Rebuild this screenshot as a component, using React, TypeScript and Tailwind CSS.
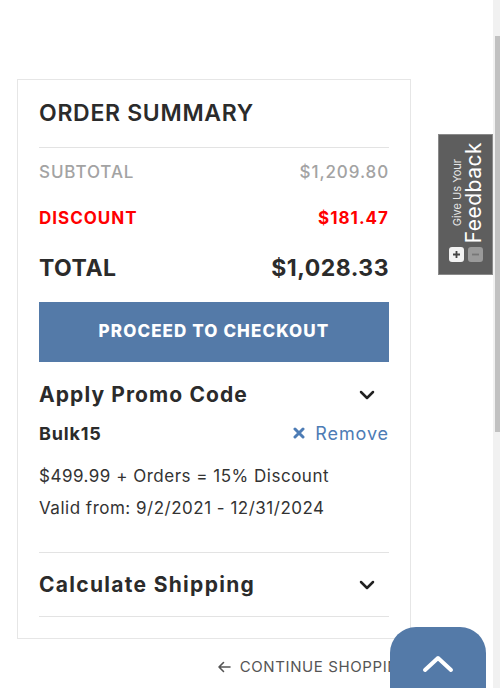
function ChevronDown() {
  return (
    <svg width="16" height="16" viewBox="0 0 16 16" fill="none">
      <path d="M2 5l6 6 6-6" stroke="#222" strokeWidth="2.5" strokeLinecap="round" strokeLinejoin="round" />
    </svg>
  );
}

function Row({ label, value, className }: { label: string; value: string; className: string }) {
  return (
    <div className={`flex items-center justify-between ${className}`}>
      <span>{label}</span>
      <span>{value}</span>
    </div>
  );
}

function FeedbackTab() {
  return (
    <div className="absolute left-[438px] top-[134px] w-[55px] h-[141px] bg-[#5e5e5e] border border-[#8a8a8a] flex flex-col items-center">
      <div className="h-[112px] w-full flex items-center justify-center pt-[4px]">
        <div className="[writing-mode:vertical-rl] rotate-180 text-center text-white leading-none">
          <div className="text-[11px] text-[#e6e6e6] mr-[5px]">Give Us Your</div>
          <div className="text-[21px] tracking-[0.5px]">Feedback</div>
        </div>
      </div>
      <div className="flex gap-[4px]">
        <span className="w-[15px] h-[15px] rounded-[3px] bg-[#f2f2f2] flex items-center justify-center">
          <svg width="9" height="9" viewBox="0 0 9 9"><path d="M4.5 1v7M1 4.5h7" stroke="#444" strokeWidth="1.8" /></svg>
        </span>
        <span className="w-[15px] h-[15px] rounded-[3px] bg-[#9a9a9a] flex items-center justify-center">
          <svg width="9" height="9" viewBox="0 0 9 9"><path d="M1 4.5h7" stroke="#777" strokeWidth="1.8" /></svg>
        </span>
      </div>
    </div>
  );
}

export default function App() {
  return (
    <div className="relative w-[500px] h-[688px] overflow-hidden bg-white font-['Inter',sans-serif] text-[#2b2b2b]">
      <div className="pl-[17px] pt-[79px] w-[411px]">
        <div className="border border-[#e6e6e6] px-[21px] pb-[21px]">
          <div className="h-[68px] flex items-center border-b border-[#e3e3e3]">
            <h2 className="text-[23px] font-semibold tracking-[0.7px] text-[#2b2b2b]">ORDER SUMMARY</h2>
          </div>
          <Row label="SUBTOTAL" value="$1,209.80" className="h-[49px] text-[17px] font-medium tracking-[0.9px] text-[#a3a3a3]" />
          <Row label="DISCOUNT" value="$181.47" className="h-[44px] text-[17px] font-bold tracking-[1px] text-[#ff0000]" />
          <Row label="TOTAL" value="$1,028.33" className="h-[55px] text-[23px] font-bold tracking-[0.5px] text-[#2b2b2b]" />
          <button
            type="button"
            className="mt-[6px] w-full h-[60px] bg-[#547aa8] text-white text-[17px] font-extrabold tracking-[1.1px]"
          >
            PROCEED TO CHECKOUT
          </button>
          <div className="mt-[9px] h-[48px] flex items-center justify-between">
            <span className="text-[21px] font-bold tracking-[1.1px]">Apply Promo Code</span>
            <span className="mr-[14px]"><ChevronDown /></span>
          </div>
          <div className="h-[28px] flex items-center justify-between">
            <span className="text-[18px] font-bold tracking-[0.8px]">Bulk15</span>
            <span className="flex items-center gap-[10px] text-[#4d7cb5] text-[18px] tracking-[0.9px]">
              <svg width="12" height="12" viewBox="0 0 12 12">
                <path d="M2 2l8 8M10 2l-8 8" stroke="#4d7cb5" strokeWidth="3" strokeLinecap="round" />
              </svg>
              Remove
            </span>
          </div>
          <div className="mt-[13px] pb-[28px] border-b border-[#e3e3e3] text-[17px] tracking-[0.5px] leading-[32px] text-[#333]">
            <p>$499.99 + Orders = 15% Discount</p>
            <p>Valid from: 9/2/2021 - 12/31/2024</p>
          </div>
          <div className="h-[64px] flex items-center justify-between border-b border-[#e3e3e3]">
            <span className="text-[21px] font-bold tracking-[1.3px]">Calculate Shipping</span>
            <span className="mr-[14px]"><ChevronDown /></span>
          </div>
        </div>
        <div className="h-[56px] flex items-center justify-end">
          <span className="flex items-center gap-[9px] text-[15px] tracking-[0.6px] text-[#555] uppercase whitespace-nowrap">
            <svg width="14" height="12" viewBox="0 0 14 12" fill="none">
              <path d="M13 6H2M6.5 1.5L2 6l4.5 4.5" stroke="#555" strokeWidth="1.6" strokeLinecap="round" strokeLinejoin="round" />
            </svg>
            Continue Shopping
          </span>
        </div>
      </div>

      <FeedbackTab />

      <div className="absolute left-[390px] top-[627px] w-[96px] h-[80px] bg-[#547aa8] rounded-t-[26px] flex justify-center pt-[26px]">
        <svg width="32" height="20" viewBox="0 0 32 20" fill="none">
          <path d="M3 17L16 5l13 12" stroke="white" strokeWidth="4" strokeLinecap="round" strokeLinejoin="round" />
        </svg>
      </div>

      <div className="absolute right-0 top-0 w-[7px] h-[688px] bg-[#f1f1f1]">
        <div className="ml-[2px] mt-[36px] w-[5px] h-[396px] bg-[#c1c1c1]" />
      </div>
    </div>
  );
}
